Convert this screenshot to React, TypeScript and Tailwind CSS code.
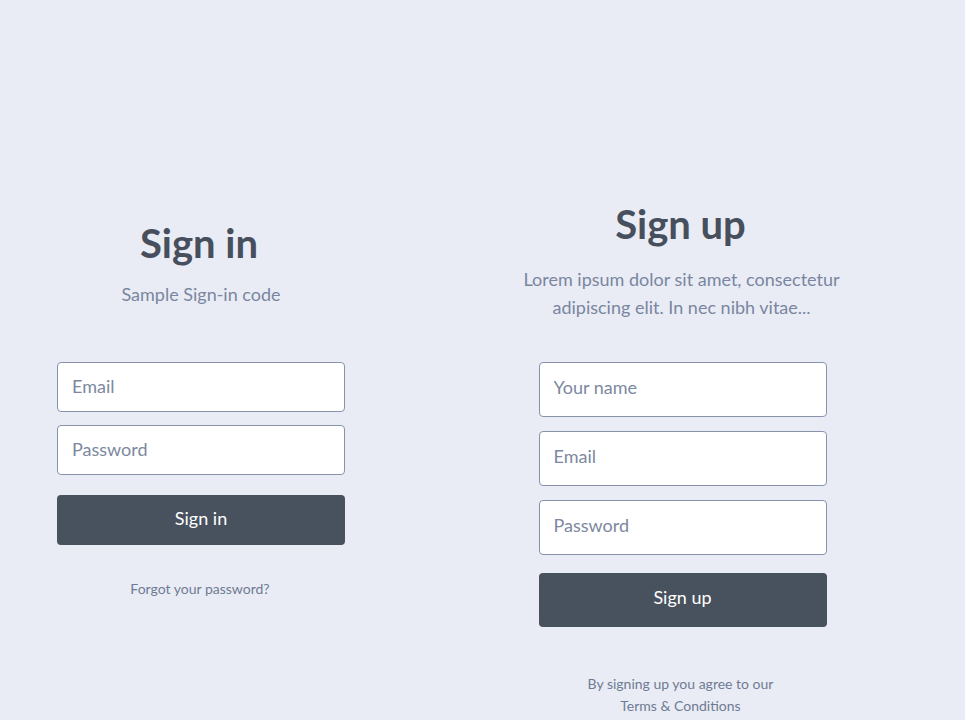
const font = { fontFamily: "Lato, 'Open Sans', sans-serif" };

function Field({ placeholder, tall }: { placeholder: string; tall?: boolean }) {
  return (
    <input
      type="text"
      placeholder={placeholder}
      className={
        tall
          ? "w-full h-[55px] rounded-[4px] border border-[#8893aa] bg-white px-[14px] pb-[5px] text-[18px] text-[#474f5c] placeholder:text-[#7c88a0] outline-none"
          : "w-full h-[50px] rounded-[4px] border border-[#8893aa] bg-white px-[14px] pb-[2px] text-[18px] text-[#474f5c] placeholder:text-[#7c88a0] outline-none"
      }
    />
  );
}

function SignIn() {
  return (
    <div className="w-[402px] shrink-0 pt-[219px] flex flex-col items-center">
      <h1 className="text-[40px] leading-[48px] font-bold text-[#474f5c] -translate-x-[2px]">Sign in</h1>
      <p className="mt-[13px] text-[18px] leading-[28px] text-[#7a86a0]">Sample Sign-in code</p>
      <form className="mt-[54px] w-[288px] flex flex-col gap-[13px]">
        <Field placeholder="Email" />
        <Field placeholder="Password" />
        <button
          type="button"
          className="mt-[7px] h-[50px] w-full rounded-[4px] bg-[#48515e] pb-[4px] text-white text-[18px]"
        >
          Sign in
        </button>
      </form>
      <a className="mt-[34px] text-[14px] leading-[20px] text-[#6f7b93] cursor-pointer -translate-x-[1px]">
        Forgot your password?
      </a>
    </div>
  );
}

function SignUp() {
  return (
    <div className="flex-1 pt-[200px] flex flex-col items-center -translate-x-[1px]">
      <h1 className="text-[40px] leading-[48px] font-bold text-[#474f5c] -translate-x-[2px]">Sign up</h1>
      <p className="mt-[17px] w-[340px] text-center text-[18px] leading-[28px] text-[#7a86a0] -translate-x-[1px]">
        Lorem ipsum dolor sit amet, consectetur adipiscing elit. In nec nibh vitae...
      </p>
      <form className="mt-[41px] w-[288px] flex flex-col gap-[14px]">
        <Field placeholder="Your name" tall />
        <Field placeholder="Email" tall />
        <Field placeholder="Password" tall />
        <button
          type="button"
          className="mt-[4px] h-[54px] w-full rounded-[4px] bg-[#48515e] pb-[6px] text-white text-[18px]"
        >
          Sign up
        </button>
      </form>
      <p className="mt-[46px] text-center text-[14px] leading-[22px] text-[#6f7b93] -translate-x-[2px]">
        By signing up you agree to our
        <br />
        Terms &amp; Conditions
      </p>
    </div>
  );
}

export default function App() {
  return (
    <div style={font} className="w-screen h-screen overflow-hidden bg-[#e9ecf5] flex">
      <SignIn />
      <SignUp />
    </div>
  );
}
